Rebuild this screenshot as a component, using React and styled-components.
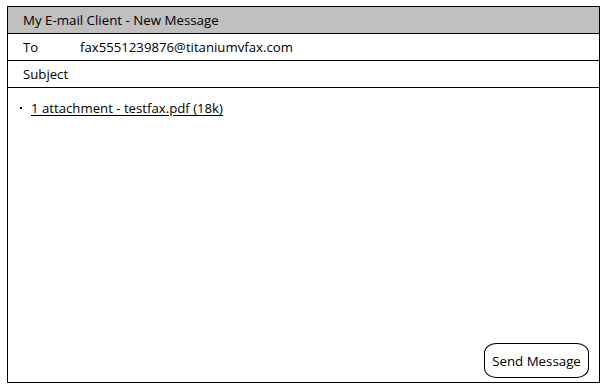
import React from "react";
import styled, { createGlobalStyle } from "styled-components";

const GlobalStyle = createGlobalStyle`
  body {
    margin: 0;
    background: #ffffff;
    font-family: "Open Sans", "Noto Sans", sans-serif;
    color: #000;
  }
`;

const Page = styled.div`
  width: 606px;
  height: 390px;
  padding: 6px 0 0 7px;
  box-sizing: border-box;
`;

const Window = styled.div`
  width: 593px;
  height: 377px;
  box-sizing: border-box;
  border: 1px solid #000;
  display: flex;
  flex-direction: column;
`;

const TitleBar = styled.div`
  height: 26px;
  background: #c0c0c0;
  border-bottom: 1px solid #000;
  display: flex;
  align-items: center;
  padding-left: 15px;
  font-size: 13.3px;
`;

const FieldRow = styled.div`
  height: 26px;
  border-bottom: 1px solid #000;
  display: flex;
  align-items: center;
  padding-left: 15px;
  font-size: 13.2px;
`;

const Label = styled.span`
  width: 57px;
`;

const Body = styled.div`
  flex: 1;
  display: flex;
  flex-direction: column;
  padding: 11px 10px 4px 10px;
`;

const AttachmentList = styled.ul`
  margin: 0;
  padding: 0;
  list-style: none;
  font-size: 13.2px;
`;

const Attachment = styled.li`
  display: flex;
  align-items: center;
  gap: 9px;

  &::before {
    content: "";
    width: 2px;
    height: 2px;
    background: #000;
    margin-left: 2px;
  }
`;

const AttachmentLink = styled.a`
  color: #000;
  text-decoration: underline;
  text-underline-offset: 2px;
`;

const Footer = styled.div`
  margin-top: auto;
  display: flex;
  justify-content: flex-end;
`;

const SendButton = styled.button`
  font-family: inherit;
  font-size: 13.3px;
  background: #fff;
  color: #000;
  border: 1px solid #000;
  border-radius: 12px / 10px;
  width: 105px;
  height: 35px;
  padding: 0;
`;

export default function App() {
  return (
    <>
      <GlobalStyle />
      <Page>
        <Window>
          <TitleBar>My E-mail Client - New Message</TitleBar>
          <FieldRow>
            <Label>To</Label>
            <span>fax5551239876@titaniumvfax.com</span>
          </FieldRow>
          <FieldRow>
            <Label>Subject</Label>
          </FieldRow>
          <Body>
            <AttachmentList>
              <Attachment>
                <AttachmentLink>1 attachment - testfax.pdf (18k)</AttachmentLink>
              </Attachment>
            </AttachmentList>
            <Footer>
              <SendButton>Send Message</SendButton>
            </Footer>
          </Body>
        </Window>
      </Page>
    </>
  );
}
